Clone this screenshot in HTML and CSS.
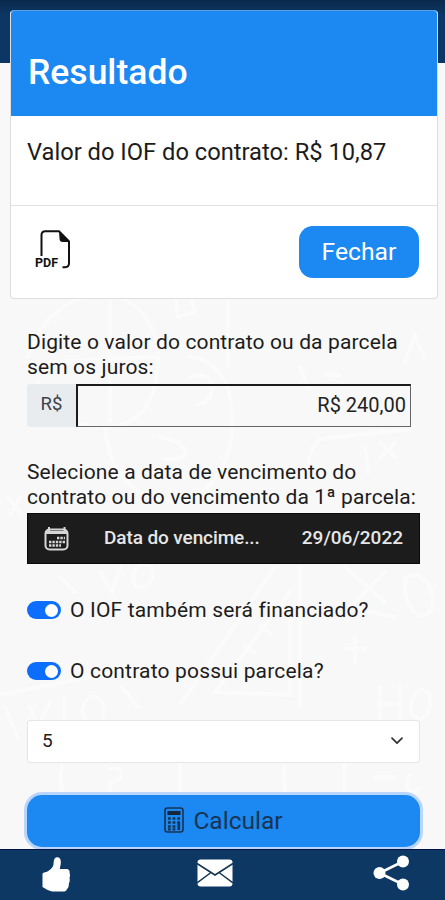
FILE: index.html
```html
<!DOCTYPE html>
<html lang="pt-BR">
<head>
<meta charset="UTF-8">
<meta name="viewport" content="width=device-width, initial-scale=1.0">
<title>Calculadora de IOF</title>
<link rel="stylesheet" href="styles.css">
</head>
<body>
<div class="topbar"></div>

<svg class="doodles" viewBox="0 0 445 786" fill="none" stroke="#fff" stroke-width="4" stroke-linecap="round">
  <path d="M28 300C40 262 70 236 104 238C140 240 158 270 158 302C158 345 138 370 104 370C68 370 45 352 38 325M110 240V365M50 305L155 300"/>
  <path d="M105 370C108 410 132 442 170 445C208 444 232 410 232 365C232 330 222 305 190 300M228 238V310"/>
  <path d="M175 238L178 260L195 255L190 240M190 320C215 310 222 340 198 348M160 380C190 385 195 405 165 402"/>
  <path d="M410 372L320 382C310 390 308 400 309 412M365 390L368 415M380 385L395 400M395 385L380 402M300 310L308 330M325 318H340M405 305L415 278L425 302"/>
  <path d="M8 440L20 455M20 440L10 458M60 520L75 535M100 515L112 535L122 505M140 508C128 515 132 535 145 530C158 520 155 505 140 508"/>
  <path d="M300 510V650M275 510L182 645M290 535L215 635L290 638L290 550M230 608L240 616M245 588L255 596M260 568L270 576"/>
  <path d="M0 638L130 612M5 650L18 682M30 650L38 670L50 645M65 640V670M90 640C75 650 85 675 100 665C110 650 100 638 90 640M122 630L138 650"/>
  <path d="M345 510L385 545M385 515L350 550L395 560M405 525C402 565 440 570 432 535C425 515 405 515 405 525M355 580V605M345 592H365"/>
  <path d="M380 630V665M380 647H400M400 630V665M420 633C405 643 410 668 425 660C435 645 430 631 420 633"/>
  <path d="M62 710C58 725 62 740 70 745M180 705V735M285 710C280 725 290 735 280 745M345 705V735M375 720H395M410 718C402 728 410 740 420 732M110 712C125 708 125 725 110 725V740"/>
</svg>

<form class="form">
  <label class="label" for="valor">Digite o valor do contrato ou da parcela<br>sem os juros:</label>
  <div class="money">
    <span class="prefix">R$</span>
    <input type="text" id="valor" class="amount" value="R$ 240,00">
  </div>

  <div class="label label-date">Selecione a data de vencimento do<br>contrato ou do vencimento da 1ª parcela:</div>
  <div class="date">
    <svg class="calendar" viewBox="0 0 26 26" fill="none" stroke="#d6d6d6">
      <rect x="1.5" y="3.5" width="22" height="20" rx="4" stroke-width="2"/>
      <path d="M2 6.5H23" stroke-width="3"/>
      <path d="M5 1V5M20.500 1V5" stroke-width="2"/>
      <path d="M13 12H21M5 16H21M5 19.500H17" stroke-width="2.300" stroke-dasharray="2.400 1"/>
    </svg>
    <span class="date-name">Data do vencime...</span>
    <span class="date-value">29/06/2022</span>
  </div>

  <div class="check">
    <span class="switch"></span>
    <span>O IOF também será financiado?</span>
  </div>
  <div class="check check-last">
    <span class="switch"></span>
    <span>O contrato possui parcela?</span>
  </div>

  <div class="select">
    <span>5</span>
    <svg width="12" height="8" viewBox="0 0 12 8" fill="none" stroke="#333" stroke-width="1.700" stroke-linecap="round" stroke-linejoin="round"><path d="M1 1.200L6 6.200L11 1.200"/></svg>
  </div>

  <button type="button" class="calc">
    <svg width="20" height="26" viewBox="0 0 20 26">
      <rect x="1" y="1" width="18" height="24" rx="2.500" fill="none" stroke="#173453" stroke-width="1.600"/>
      <rect x="3.500" y="4" width="13" height="4" fill="#15273d"/>
      <path d="M4 11.500H16M4 15.500H16M4 19.500H12M4 22.300H12" stroke="#173453" stroke-width="2.300" stroke-dasharray="2.800 1.800"/>
      <path d="M14.800 15V23" stroke="#173453" stroke-width="2.600"/>
    </svg>
    <span>Calcular</span>
  </button>
</form>

<div class="modal">
  <div class="modal-header">Resultado</div>
  <div class="modal-body">Valor do IOF do contrato: R$ 10,87</div>
  <div class="modal-footer">
    <div class="pdf">
      <svg width="30" height="39" viewBox="0 0 30 39">
        <path d="M1.500 26V5Q1.500 1.200 5.300 1.200H19L29 11.500V33Q29 37.200 25 37.200H22.500" fill="none" stroke="#111" stroke-width="2"/>
        <path d="M19 1L29.500 12H23Q19.500 12 19.500 8.500Z" fill="#111"/>
      </svg>
      <span class="pdf-text">PDF</span>
    </div>
    <button type="button" class="close">Fechar</button>
  </div>
</div>

<div class="bottombar">
  <svg class="like" width="30" height="36" viewBox="0 0 30 36" fill="#fff">
    <path d="M15 1.500C17.500 .5 19.500 2 19.800 5C20 8 19.200 10.500 18.800 13H25C28 13 29 15 28.600 17C29.300 19 29 21 28.500 22C29 24 28.800 26 27.800 27.500C28 30 27.500 32 26 33C25.500 35 24 35.500 22 35.500H13C8 35.500 5 33 1.500 31V18C1.500 16.500 3 16.500 5.500 16C9 14 12 11.500 12.500 8.500C12.800 6 12.500 2.500 15 1.500Z"/>
  </svg>
  <svg class="mail" width="36" height="28" viewBox="0 0 36 28">
    <rect x="0.500" y="0.500" width="35" height="27" rx="3" fill="#fff"/>
    <path d="M0 4.500L18 16L36 4.500M0 24L14 13.500M36 24L22 13.500" fill="none" stroke="#143453" stroke-width="1.500"/>
  </svg>
  <svg class="share" width="36" height="36" viewBox="0 0 36 36" fill="#fff">
    <path d="M30 6.500L6.500 18L30 29.500" fill="none" stroke="#fff" stroke-width="2.600"/>
    <circle cx="30" cy="6.500" r="6"/>
    <circle cx="6.500" cy="18" r="6"/>
    <circle cx="30" cy="29.500" r="6"/>
  </svg>
</div>
</body>
</html>
```

FILE: styles.css
```css
* {
  box-sizing: border-box;
}
body {
  margin: 0;
  position: relative;
  display: flex;
  flex-direction: column;
  height: 900px;
  overflow: hidden;
  background: #f8f8f8;
  color: #1c1c1c;
  font-family: Roboto, sans-serif;
  font-size: 21px;
}
.topbar {
  flex: none;
  height: 63px;
  background: linear-gradient(#0b294b, #0c3663 14px);
}
.doodles {
  position: absolute;
  left: 0;
  top: 57px;
  width: 445px;
  height: 786px;
  opacity: 0.45;
}
.form {
  position: relative;
  display: flex;
  flex-direction: column;
  flex: 1;
  min-height: 0;
  padding: 267px 25px 0 27px;
}
.label {
  flex: none;
  line-height: 25px;
  letter-spacing: 0.13px;
  white-space: nowrap;
}
.money {
  display: flex;
  flex: none;
  width: 384px;
  height: 43px;
  margin-top: 4px;
}
.prefix {
  width: 49px;
  background: #e9ecef;
  border-radius: 3px 0 0 3px;
  color: #3d4248;
  font-size: 18.5px;
  line-height: 41px;
  text-align: center;
}
.amount {
  flex: 1;
  min-width: 0;
  padding: 0 4px 2px;
  border: 2px solid #1b1b1b;
  border-right: 1px solid #666;
  border-bottom: 1px solid #666;
  background: transparent;
  color: #222;
  font-family: inherit;
  font-size: 20px;
  text-align: right;
}
.label-date {
  margin-top: 33px;
}
.date {
  display: flex;
  flex: none;
  align-items: center;
  height: 51px;
  margin-top: 3px;
  padding: 0 16px 0 16px;
  background: #1c1c1c;
  border: 1px solid #0a0a0a;
  color: #e6e6e6;
  font-size: 19px;
  font-weight: 500;
}
.calendar {
  width: 26px;
  height: 26px;
}
.date-name {
  margin-left: 34px;
  padding-bottom: 3px;
  letter-spacing: -0.1px;
  white-space: nowrap;
}
.date-value {
  margin-left: auto;
  padding-bottom: 3px;
}
.check {
  display: flex;
  flex: none;
  align-items: center;
  gap: 9px;
  height: 26px;
  margin-top: 33px;
  letter-spacing: 0.18px;
}
.check-last {
  margin-top: 35px;
}
.switch {
  width: 34px;
  height: 18px;
  padding: 3px;
  border-radius: 9px;
  background: #0d6efd;
}
.switch::after {
  content: "";
  display: block;
  width: 13px;
  height: 13px;
  margin-left: auto;
  border-radius: 50%;
  background: #fff;
}
.select {
  display: flex;
  flex: none;
  align-items: center;
  justify-content: space-between;
  height: 43px;
  margin-top: 36px;
  padding: 0 16px 2px 14px;
  border: 1px solid #e6e6e6;
  border-radius: 3px;
  background: #fff;
  font-size: 19px;
}
.calc {
  display: flex;
  flex: none;
  align-items: center;
  justify-content: center;
  gap: 9px;
  height: 52px;
  margin-top: 32px;
  padding: 0 0 2px;
  border: 0;
  border-radius: 15px;
  background: #1c89f3;
  box-shadow: 0 0 0 3px #b9d5fb;
  color: #173453;
  font-family: inherit;
  font-size: 24.5px;
}
.modal {
  position: absolute;
  left: 10px;
  top: 10px;
  width: 428px;
  height: 289px;
  overflow: hidden;
  border: 1px solid #dedede;
  border-top-color: #5a9fe0;
  border-radius: 4px;
  background: #fff;
}
.modal-header {
  height: 105px;
  padding: 40px 17px 0;
  background: #1c89f3;
  color: #fff;
  font-size: 35.5px;
  font-weight: 500;
  line-height: 42px;
}
.modal-body {
  height: 90px;
  padding: 21px 16px;
  border-bottom: 1px solid #e2e2e2;
  font-size: 23.7px;
  line-height: 30px;
  white-space: nowrap;
}
.modal-footer {
  display: flex;
  align-items: center;
  justify-content: space-between;
  height: 91px;
  padding: 0 18px 0 24px;
}
.pdf {
  position: relative;
  width: 35px;
  height: 43px;
  padding-left: 5px;
}
.pdf-text {
  position: absolute;
  left: 0;
  bottom: 3px;
  color: #111;
  font-size: 12.5px;
  font-weight: 700;
  line-height: 14px;
}
.close {
  width: 120px;
  height: 52px;
  padding: 0;
  border: 0;
  border-radius: 14px;
  background: #1c89f3;
  color: #fff;
  font-family: inherit;
  font-size: 24.7px;
}
.bottombar {
  position: relative;
  display: flex;
  flex: none;
  justify-content: space-between;
  height: 51px;
  padding: 6px 36px 0 41px;
  border-top: 1px solid #06124a;
  background: #0e3864;
}
.mail {
  margin-top: 3px;
  margin-right: 14px;
}
.share {
  margin-top: -1px;
}
```
